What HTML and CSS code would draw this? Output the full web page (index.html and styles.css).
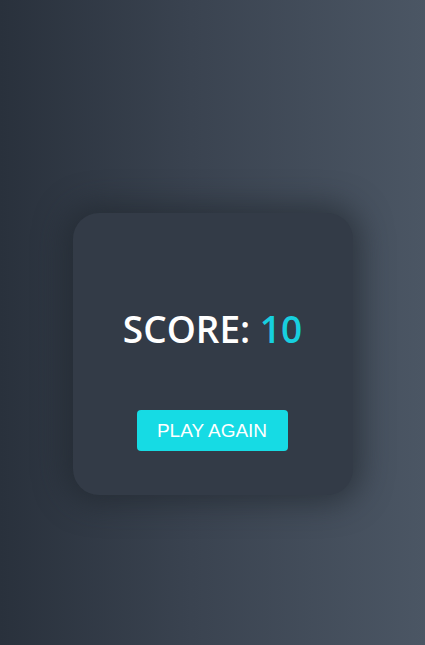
FILE: index.html
```html
<!DOCTYPE html>
<html>
<head>
<meta charset="utf-8">
<link rel="stylesheet" href="styles.css">
</head>
<body>
<main class="stage">
  <section class="card">
    <h1 class="score">SCORE: <span class="score-value">10</span></h1>
    <button class="play-btn">PLAY AGAIN</button>
  </section>
</main>
</body>
</html>
```
FILE: styles.css
```css
html, body {
  margin: 0;
  padding: 0;
}
body {
  width: 425px;
  height: 645px;
  background: linear-gradient(to right, #29313c 0%, #3a4350 45%, #4b5664 100%);
  overflow: hidden;
}
.stage {
  display: flex;
  justify-content: center;
  padding-top: 213px;
}
.card {
  box-sizing: border-box;
  width: 280px;
  height: 282px;
  border-radius: 26px;
  background: #333b47;
  box-shadow: 0 0 30px 8px rgba(30, 36, 44, 0.6);
  display: flex;
  flex-direction: column;
  align-items: center;
  padding-top: 92px;
}
.score {
  margin: 0;
  font-family: "Open Sans", sans-serif;
  font-weight: 600;
  font-size: 37px;
  line-height: 48px;
  color: #ffffff;
}
.score-value {
  color: #17cfdf;
}
.play-btn {
  margin-top: 57px;
  margin-right: 1px;
  width: 151px;
  height: 41px;
  border: none;
  border-radius: 4px;
  background: #16dbe4;
  color: #ffffff;
  font-family: "Liberation Sans", Arial, sans-serif;
  font-size: 19px;
  padding: 0;
}
```
